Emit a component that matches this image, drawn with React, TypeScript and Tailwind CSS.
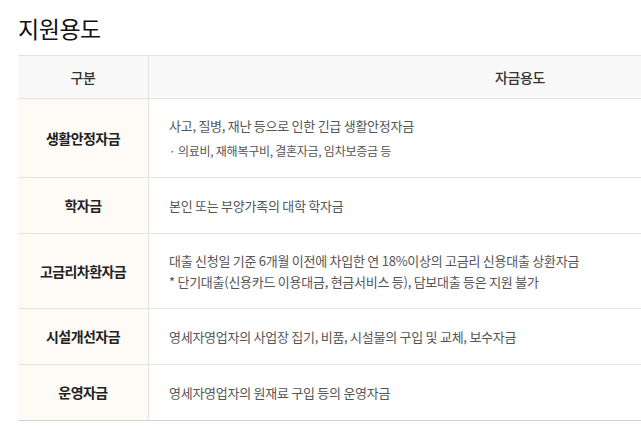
import React from "react";

const rows: { label: string; body: React.ReactNode; py: string }[] = [
  {
    label: "생활안정자금",
    py: "py-[16px]",
    body: (
      <div className="flex flex-col gap-[4px]">
        <p className="leading-[21px]">사고, 질병, 재난 등으로 인한 긴급 생활안정자금</p>
        <ul className="leading-[21px] text-[12px]">
          <li className="flex">
            <span className="w-[9px] shrink-0">·</span>
            <span>의료비, 재해복구비, 결혼자금, 임차보증금 등</span>
          </li>
        </ul>
      </div>
    ),
  },
  {
    label: "학자금",
    py: "py-[17px]",
    body: <p className="leading-[21px]">본인 또는 부양가족의 대학 학자금</p>,
  },
  {
    label: "고금리차환자금",
    py: "py-[16px]",
    body: (
      <div className="flex flex-col">
        <p className="leading-[21px]">대출 신청일 기준 6개월 이전에 차입한 연 18%이상의 고금리 신용대출 상환자금</p>
        <p className="leading-[21px]">* 단기대출(신용카드 이용대금, 현금서비스 등), 담보대출 등은 지원 불가</p>
      </div>
    ),
  },
  {
    label: "시설개선자금",
    py: "py-[17px]",
    body: <p className="leading-[21px]">영세자영업자의 사업장 집기, 비품, 시설물의 구입 및 교체, 보수자금</p>,
  },
  {
    label: "운영자금",
    py: "py-[17px]",
    body: <p className="leading-[21px]">영세자영업자의 원재료 구입 등의 운영자금</p>,
  },
];

export default function App() {
  return (
    <div
      className="w-full h-[434px] overflow-hidden bg-white"
      style={{ fontFamily: '"Noto Sans CJK KR", "Noto Sans", sans-serif' }}
    >
      <div className="pl-[18px] pt-[12px]">
        <h2 className="text-[23px] leading-[32px] tracking-[-0.02em] text-[#111] font-normal">지원용도</h2>
        <div className="mt-[11px] w-[873px] border-t border-[#e3e3e3] border-b border-b-[#cfcfcf]">
          <div className="grid grid-cols-[131px_1fr] bg-[#f9f9f9] border-b border-[#e3e3e3] h-[43px]">
            <div className="flex items-center justify-center border-r border-[#e3e3e3] text-[14px] font-medium text-[#333] tracking-[-0.03em]">
              구분
            </div>
            <div className="flex items-center justify-center text-[14px] font-medium text-[#333] tracking-[-0.03em]">
              자금용도
            </div>
          </div>
          {rows.map((r, i) => (
            <div
              key={r.label}
              className={`grid grid-cols-[131px_1fr] ${i < rows.length - 1 ? "border-b border-[#e3e3e3]" : ""}`}
            >
              <div className="flex items-center justify-center bg-[#fefbf6] border-r border-[#e3e3e3] text-[14px] font-bold text-[#222] tracking-[-0.04em]">
                {r.label}
              </div>
              <div className={`pl-[20px] ${r.py} text-[13px] text-[#555] tracking-[-0.02em]`}>{r.body}</div>
            </div>
          ))}
        </div>
      </div>
    </div>
  );
}
